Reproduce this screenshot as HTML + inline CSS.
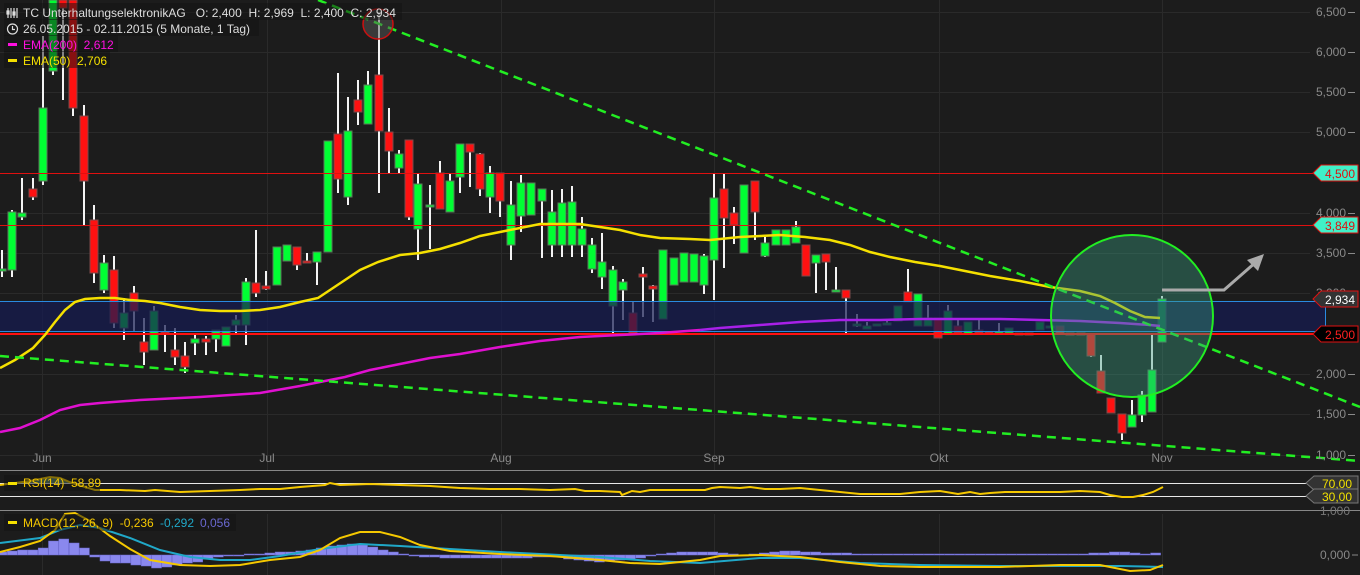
<!DOCTYPE html>
<html><head><meta charset="utf-8"><style>
html,body{margin:0;padding:0;background:#1c1c1c;overflow:hidden}
svg{display:block;font-family:"Liberation Sans",sans-serif}
</style></head><body>
<svg id="s" width="1360" height="575" viewBox="0 0 1360 575" xmlns="http://www.w3.org/2000/svg">
<rect width="1360" height="575" fill="#1c1c1c"/>
<g id="grid" stroke="#2a2a2a" stroke-width="1"></g>
<g id="candles"></g>
<rect x="0" y="301" width="1326" height="30" fill="#161c52" fill-opacity="0.72"/>
<line x1="0" y1="301.5" x2="1326" y2="301.5" stroke="#2a8ae0"/>
<line x1="0" y1="331.5" x2="1326" y2="331.5" stroke="#2a8ae0"/>
<line x1="1325.5" y1="301" x2="1325.5" y2="331" stroke="#2a8ae0"/>
<line x1="0" y1="173.5" x2="1313" y2="173.5" stroke="#e01010"/>
<line x1="0" y1="225.5" x2="1313" y2="225.5" stroke="#e01010"/>
<line x1="0" y1="334" x2="1313" y2="334" stroke="#ff1010" stroke-width="2"/>
<polyline id="e200a" fill="none" stroke="#e010d0" stroke-width="2.5"/>
<polyline id="e200b" fill="none" stroke="#a820e8" stroke-width="2.5"/>
<polyline id="e50" fill="none" stroke="#f5e000" stroke-width="2.5"/>
<line x1="318" y1="0" x2="1360" y2="407" stroke="#22ee22" stroke-width="2.5" stroke-dasharray="9,6"/>
<line x1="0" y1="356" x2="1360" y2="461" stroke="#22ee22" stroke-width="2.5" stroke-dasharray="9,6"/>
<circle cx="378" cy="24" r="15" fill="#555" fill-opacity="0.5" stroke="#cc1010" stroke-width="1.5"/>
<circle cx="1132" cy="316" r="81" fill="#3a9a80" fill-opacity="0.4" stroke="#22ee22" stroke-width="2"/>
<polyline points="1162,290 1224,290 1256,262" fill="none" stroke="#aaa" stroke-width="3"/>
<polygon points="1264,254 1247,260 1258,271" fill="#aaa"/>
<g font-size="12" fill="#8a8a8a" text-anchor="end" id="axl"></g>
<g font-size="12">
<polygon points="1313,173 1321,165 1358,165 1358,181 1321,181" fill="#40f0c8" stroke="#e01010"/>
<text x="1355" y="178" fill="#e01010" text-anchor="end">4,500</text>
<polygon points="1313,225 1321,217 1358,217 1358,233 1321,233" fill="#40f0c8" stroke="#e01010"/>
<text x="1355" y="230" fill="#e01010" text-anchor="end">3,849</text>
<polygon points="1313,299 1321,291 1358,291 1358,307 1321,307" fill="#333" stroke="#e01010"/>
<text x="1355" y="304" fill="#fff" text-anchor="end">2,934</text>
<polygon points="1313,334 1321,326 1358,326 1358,342 1321,342" fill="#000" stroke="#e01010"/>
<text x="1355" y="339" fill="#ff2020" text-anchor="end">2,500</text>
</g>
<g font-size="12" fill="#8a8a8a" text-anchor="middle">
<text x="42" y="462">Jun</text><text x="267" y="462">Jul</text><text x="501" y="462">Aug</text>
<text x="714" y="462">Sep</text><text x="939" y="462">Okt</text><text x="1162" y="462">Nov</text>
</g>
<line x1="0" y1="470.5" x2="1360" y2="470.5" stroke="#888"/>
<line x1="0" y1="510.5" x2="1360" y2="510.5" stroke="#888"/>
<line x1="0" y1="483.5" x2="1310" y2="483.5" stroke="#e8e8e8"/>
<line x1="0" y1="496.5" x2="1310" y2="496.5" stroke="#e8e8e8"/>
<polygon points="15,483 30,481 50,477 60,478 72,483" fill="#6aa080" fill-opacity="0.8"/>
<polyline id="rsi" fill="none" stroke="#f5c800" stroke-width="2"/>
<g font-size="12" fill="#f0e000">
<polygon points="1306,483 1314,476 1358,476 1358,490 1314,490" fill="#333" stroke="#777"/>
<text x="1352" y="488" text-anchor="end">70,00</text>
<polygon points="1306,496 1314,489 1358,489 1358,503 1314,503" fill="#333" stroke="#777"/>
<text x="1352" y="501" text-anchor="end">30,00</text>
</g>
<text x="1350" y="515" font-size="12" fill="#777" text-anchor="end">1,000</text>
<g id="hist" fill="#8a88ee" stroke="#6a68d0" stroke-width="0.5"></g>
<polyline id="msig" fill="none" stroke="#20a8c8" stroke-width="2"/>
<polyline id="mline" fill="none" stroke="#f5c800" stroke-width="2"/>
<text x="1350" y="559" font-size="12" fill="#888" text-anchor="end">0,000</text>
<line x1="1352" y1="555" x2="1358" y2="555" stroke="#888"/>
<g font-size="12">
<rect x="4" y="3" width="398" height="17" fill="#111" fill-opacity="0.5"/>
<rect x="4" y="19" width="255" height="17" fill="#111" fill-opacity="0.5"/>
<rect x="4" y="35" width="114" height="17" fill="#111" fill-opacity="0.5"/>
<rect x="4" y="51" width="106" height="17" fill="#111" fill-opacity="0.5"/>
<g stroke="#ddd" stroke-width="1.2" fill="none"><path d="M8 8v10M11 8v10M14 8v10M17 8v10"/><rect x="7" y="11" width="2" height="3" fill="#ddd"/><rect x="13" y="12" width="2" height="3" fill="#ddd"/><circle cx="12.5" cy="29" r="5"/><path d="M12.5 26v3.5h2.5"/></g>
<text x="23" y="17" fill="#ddd">TC UnterhaltungselektronikAG&#160;&#160; O: 2,400&#160; H: 2,969&#160; L: 2,400&#160; C: 2,934</text>
<text x="23" y="33" fill="#ddd">26.05.2015 - 02.11.2015 (5 Monate, 1 Tag)</text>
<rect x="8" y="43" width="9" height="3" fill="#ff10e0"/>
<text x="23" y="49" fill="#ff10e0">EMA(200)&#160; 2,612</text>
<rect x="8" y="59" width="9" height="3" fill="#f5e000"/>
<text x="23" y="65" fill="#f5e000">EMA(50)&#160; 2,706</text>
<rect x="4" y="475" width="96" height="16" fill="#111" fill-opacity="0.5"/>
<rect x="8" y="482" width="9" height="3" fill="#f5e000"/>
<text x="23" y="487" fill="#f5c800">RSI(14)&#160; 58,89</text>
<rect x="4" y="514" width="232" height="17" fill="#111" fill-opacity="0.5"/>
<rect x="8" y="521" width="9" height="3" fill="#f5e000"/>
<text x="23" y="527" fill="#f5c800">MACD(12, 26, 9)&#160; -0,236</text>
<text x="160" y="527" fill="#20a8c8">-0,292</text>
<text x="200" y="527" fill="#6a68d0">0,056</text>
</g>
</svg>
<script>
var NS="http://www.w3.org/2000/svg";
function el(p,t,a){var e=document.createElementNS(NS,t);for(var k in a)e.setAttribute(k,a[k]);p.appendChild(e);return e;}
var g=document.getElementById('grid');
[12,52,92,132,173,213,253,293,334,374,414,455].forEach(function(y){el(g,'line',{x1:0,y1:y+.5,x2:1310,y2:y+.5});});
[42,267,501,714,939,1162].forEach(function(x){el(g,'line',{x1:x+.5,y1:0,x2:x+.5,y2:470});el(g,'line',{x1:x+.5,y1:514,x2:x+.5,y2:575});});
var ax=document.getElementById('axl');
[["6,500",12],["6,000",52],["5,500",92],["5,000",132],["4,000",213],["3,500",253],["3,000",293],["2,000",374],["1,500",414],["1,000",455]].forEach(function(a){
 var t=el(ax,'text',{x:1346,y:a[1]+4});t.textContent=a[0];el(ax,'line',{x1:1348,y1:a[1]+.5,x2:1355,y2:a[1]+.5,stroke:'#8a8a8a'});});
var C=[[2,'g',269,271,250,277],[12,'g',212,270,210,277],[22,'g',213,217,178,220],[33,'r',189,197,178,200],[43,'g',108,181,36,185],[53,'g',0,71,0,75],[63,'r',0,8,0,100],[73,'r',0,108,0,116],[84,'r',116,181,105,225],[94,'r',220,273,205,283],[104,'g',263,290,255,293],[114,'r',270,323,256,328],[124,'g',313,328,298,340],[134,'r',293,311,286,332],[144,'r',342,352,318,365],[154,'g',311,350,306,350],[165,'r',332,334,325,352],[175,'r',350,357,328,365],[185,'r',356,367,342,373],[195,'g',339,343,335,355],[206,'r',339,342,336,355],[216,'g',330,339,330,352],[226,'g',327,346,327,346],[236,'g',320,325,315,333],[246,'g',282,325,278,345],[256,'r',283,293,230,297],[266,'r',286,289,271,290],[277,'g',247,285,247,285],[287,'g',245,261,245,261],[297,'r',247,265,247,270],[307,'r',261,263,253,263],[317,'g',252,262,252,285],[328,'g',141,252,141,252],[338,'r',134,179,73,193],[348,'g',131,197,97,205],[358,'r',100,112,80,125],[368,'g',85,124,71,124],[379,'r',75,131,12,193],[389,'r',132,151,108,173],[399,'g',154,168,150,173],[409,'r',140,217,140,220],[418,'g',184,229,174,260],[430,'g',205,207,185,249],[440,'r',173,209,161,209],[450,'g',181,212,174,212],[460,'g',144,177,144,193],[470,'r',144,152,144,187],[480,'r',154,189,153,196],[490,'g',173,197,166,213],[500,'r',173,201,173,217],[511,'g',205,245,181,260],[521,'g',183,216,175,232],[531,'g',183,215,183,215],[542,'g',189,201,189,258],[552,'g',212,245,190,257],[562,'g',203,245,189,257],[572,'g',202,245,186,257],[582,'g',229,245,217,257],[592,'g',245,269,238,273],[602,'g',262,277,233,289],[613,'g',270,306,266,333],[623,'g',282,290,279,320],[633,'r',313,333,302,333],[643,'r',274,277,267,317],[653,'r',286,289,285,322],[663,'g',250,319,250,319],[674,'g',258,285,258,285],[684,'g',253,282,253,282],[694,'g',254,282,254,282],[704,'g',256,285,254,294],[714,'g',198,260,174,300],[724,'r',189,218,174,268],[734,'r',213,225,207,244],[744,'g',185,253,185,253],[755,'r',181,212,181,240],[765,'g',243,256,237,257],[776,'g',230,245,230,245],[786,'g',230,245,230,245],[796,'g',227,243,221,243],[806,'r',245,276,245,276],[816,'g',255,263,255,293],[826,'r',254,262,254,290],[836,'g',290,292,267,292],[846,'r',290,298,290,334],[857,'g',324,326,314,327],[867,'g',326,329,322,329],[877,'g',324,325,324,325],[887,'g',323,324,320,324],[898,'g',306,321,306,321],[908,'r',292,302,269,302],[918,'g',294,326,294,326],[928,'g',318,326,305,326],[938,'r',318,338,318,338],[948,'g',311,334,305,334],[958,'r',326,333,320,333],[968,'g',322,334,322,334],[979,'r',330,333,320,333],[989,'r',332,333,332,334],[999,'g',332,333,323,334],[1009,'g',328,333,328,333],[1019,'r',333,334,333,334],[1029,'r',333,334,333,334],[1040,'g',322,330,322,330],[1050,'g',326,327,326,327],[1060,'r',326,333,326,333],[1070,'r',333,334,333,334],[1081,'r',333,334,333,334],[1091,'r',334,356,334,357],[1101,'r',371,393,355,393],[1111,'r',398,413,398,413],[1122,'r',414,433,414,440],[1132,'g',415,427,400,427],[1142,'g',395,415,391,422],[1152,'g',370,412,335,412],[1162,'g',299,342,296,342]];
var cg=document.getElementById('candles');
C.forEach(function(c){
 el(cg,'rect',{x:c[0]-1,y:c[4],width:2,height:Math.max(1,c[5]-c[4]),fill:'#f4f4f4'});
 var h=Math.max(2,c[3]-c[2]);
 el(cg,'rect',{x:c[0]-4,y:c[2],width:8,height:h,fill:c[1]=='g'?'#00ff33':'#ff1111',stroke:c[1]=='g'?'#5a7a5a':'#7a4a4a','stroke-width':1});
});
function P(id,s){document.getElementById(id).setAttribute('points',s);}
P('e50',"0,368 15,360 33,348 45,335 55,322 65,310 75,302 85,299 100,298 115,298 130,300 145,301 160,303 180,307 200,310 220,311 240,311 260,310 280,307 300,302 318,298 330,290 345,280 360,270 378,262 400,255 420,253 440,249 460,243 480,236 500,232 520,228 540,224 560,224 580,224 600,227 620,230 640,235 660,238 690,239 710,240 740,237 780,235 805,237 830,240 850,245 870,252 890,257 915,262 940,266 960,270 990,276 1020,281 1050,287 1080,291 1100,296 1115,303 1130,311 1145,317 1160,318");
P('e200a',"0,432 20,428 40,420 60,410 80,405 100,403 140,400 200,397 260,393 300,386 320,382 345,377 370,370 400,364 430,358 460,354 500,347 540,341 580,337 620,335 660,333 700,330");
P('e200b',"700,330 720,328 760,325 800,322 840,320 880,320 920,319 960,319 1000,319 1040,320 1080,321 1120,323 1150,325 1160,326");
P('rsi',"0,485 15,483 30,481 50,477 60,478 72,483 95,490 120,490 145,491 155,490 180,492 210,491 240,490 260,489 280,489 300,487 325,485 330,483 340,485 370,484 400,485 430,486 460,488 490,489 520,489 550,490 575,489 585,491 600,491 620,492 622,495 632,491 640,492 650,490 670,490 690,490 705,490 712,488 720,487 740,488 750,487 765,489 780,489 800,488 820,490 840,492 860,494 880,494 900,494 920,492 940,491 958,494 970,492 980,494 990,493 1005,492 1030,492 1060,492 1080,491 1100,492 1110,495 1122,497 1133,497 1143,495 1153,492 1163,487");
P('mline',"0,552 20,547 40,541 55,530 65,514 75,513 90,521 110,536 130,549 150,560 180,565 210,566 240,565 270,560 300,557 320,550 340,538 360,532 380,532 400,537 420,545 450,551 500,554 550,556 600,560 630,563 660,564 700,560 720,556 760,555 800,557 840,562 880,566 920,567 1000,567 1060,565 1100,565 1130,571 1150,570 1163,565");
P('msig',"0,543 40,538 60,530 80,525 100,528 130,538 160,550 190,557 220,560 250,560 280,556 320,549 360,544 400,546 450,549 500,552 560,555 600,557 650,561 700,563 760,558 800,558 860,563 920,565 1000,566 1080,566 1120,566 1163,567");
var H=[-3,-4,-5,-5,-7,-14,-16,-12,-7,2,6,8,8,10,11,13,12,10,8,7,4,2,1,0,-1,-1,-2,-3,-3,-4,-5,-7,-9,-10,-11,-10,-8,-5,-3,-1,1,2,2,3,3,3,3,3,3,3,3,3,2,2,2,4,5,6,7,6,5,4,3,1,-1,-2,-3,-3,-3,-3,-2,-1,0,-1,-2,-3,-4,-4,-3,-3,-2,-2,-2,-1,-1,-1,-1,-1,-1,-1,-1,-1,-1,-1,-1,-1,-1,-1,-1,-1,-1,-1,-1,-1,-1,-1,-2,-2,-3,-3,-2,-1,-2];
var hg=document.getElementById('hist');
H.forEach(function(v,i){var x=i*10.3-3;var y=v<0?555+v:555;el(hg,'rect',{x:x,y:y,width:10,height:Math.max(1,Math.abs(v))});});
</script>
</body></html>
